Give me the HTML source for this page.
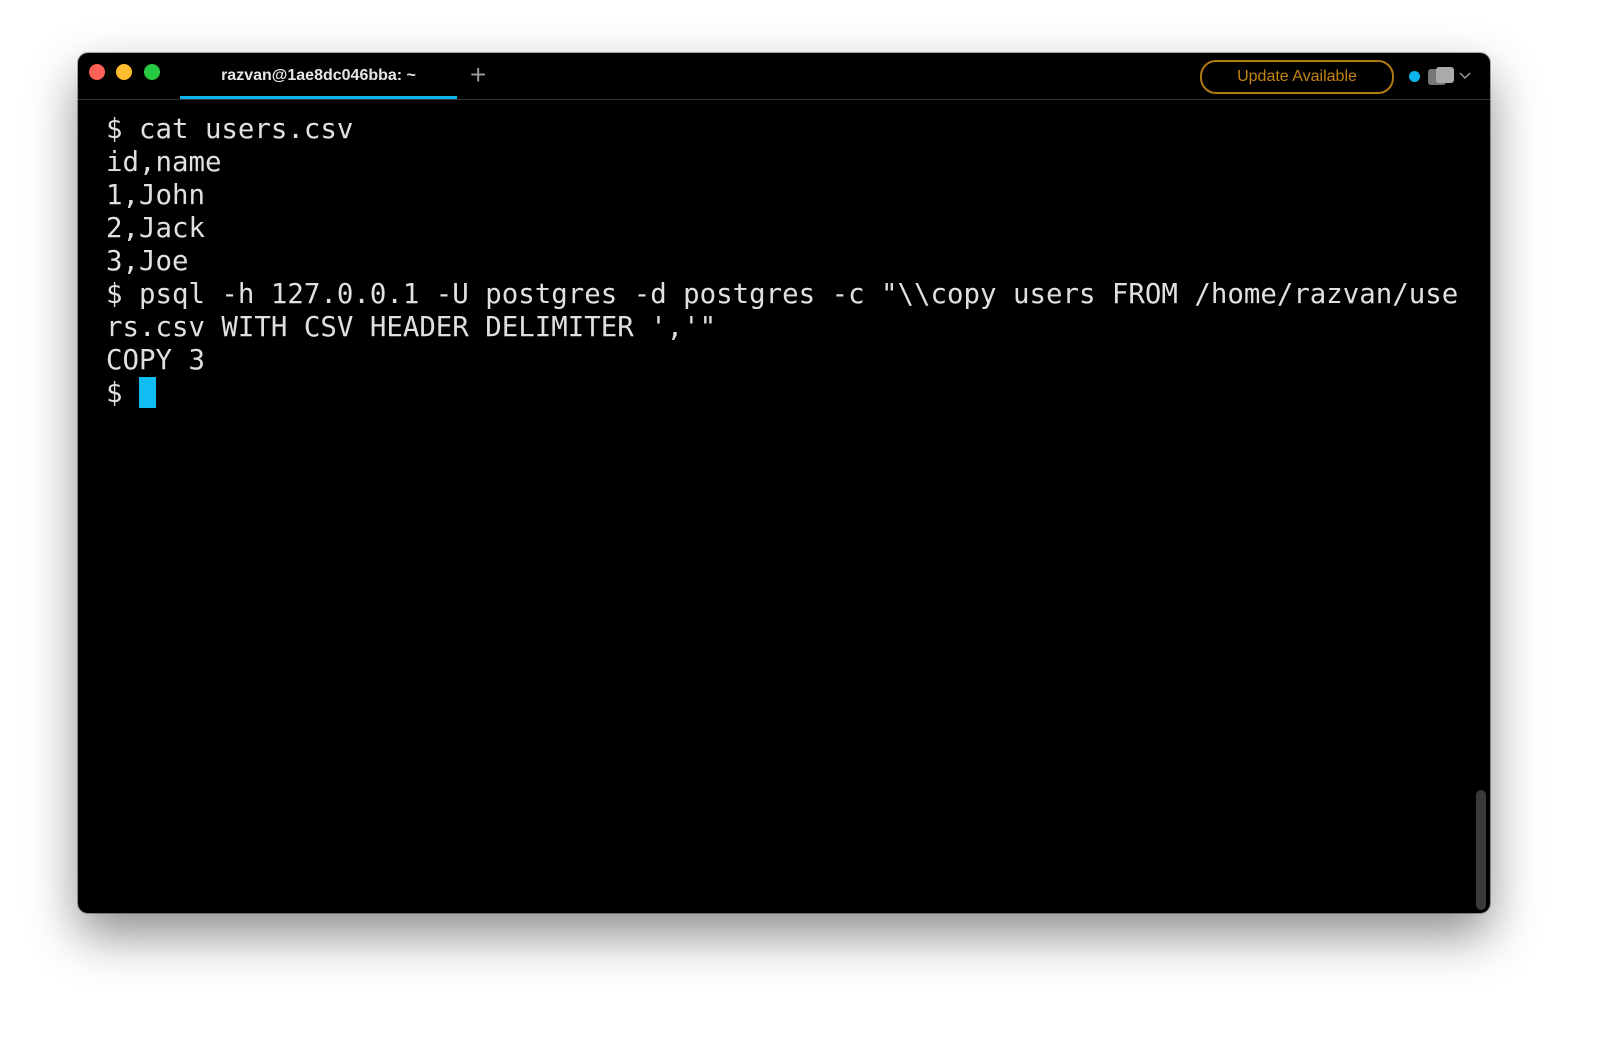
<!DOCTYPE html>
<html><head><style>
body{margin:0;width:1600px;height:1037px;background:#fff;position:relative;overflow:hidden}
.win{position:absolute;left:78px;top:53px;width:1412px;height:860px;background:#000;border-radius:10px;box-shadow:0 22px 50px rgba(0,0,0,.45),0 0 0 1px rgba(0,0,0,.3);overflow:hidden}
.dot{position:absolute;top:11px;width:16px;height:16px;border-radius:50%}
.bar{position:absolute;left:0;right:0;top:46px;height:1px;background:#333}
.tab{position:absolute;left:102px;top:0;width:277px;height:47px;color:#e6e6e6;font:600 16px "Liberation Sans",sans-serif;text-align:center;line-height:46px}
.tab:after{content:"";position:absolute;left:0;right:0;bottom:0;height:4px;background:#0bb4ea}
.plus{position:absolute;left:392px;top:6px;color:#999;font:300 28px "Liberation Sans",sans-serif}
.upd{position:absolute;left:1122px;top:7px;width:190px;height:30px;border:2px solid #b07a10;border-radius:16px;color:#c3850f;font:16px "Liberation Sans",sans-serif;text-align:center;line-height:30px}
pre{position:absolute;left:28px;top:60px;margin:0;color:#e0e0e0;font:27.4px/33px "DejaVu Sans Mono",monospace}
.cur{display:inline-block;width:17px;height:31px;background:#10bdf2;vertical-align:-6px}
.sb{position:absolute;left:1398px;top:737px;width:10px;height:120px;border-radius:5px;background:#3a3a3a}
</style></head><body>
<div class="win">
<div class="dot" style="left:11px;background:#fe5f57"></div>
<div class="dot" style="left:38px;background:#febc2e"></div>
<div class="dot" style="left:66px;background:#28c840"></div>
<div class="tab">razvan@1ae8dc046bba: ~</div>
<div class="plus">+</div>
<div class="bar"></div>
<div class="upd">Update Available</div>
<div style="position:absolute;left:1331px;top:18px;width:11px;height:11px;border-radius:50%;background:#0bb4ea"></div>
<div style="position:absolute;left:1350px;top:16px;width:18px;height:16px;border-radius:3px;background:#777"></div>
<div style="position:absolute;left:1358px;top:14px;width:18px;height:16px;border-radius:3px;background:#aaa"></div>
<svg style="position:absolute;left:1381px;top:18px" width="12" height="10"><path d="M1 2l5 5 5-5" stroke="#999" stroke-width="1.5" fill="none"/></svg>
<pre>$ cat users.csv
id,name
1,John
2,Jack
3,Joe
$ psql -h 127.0.0.1 -U postgres -d postgres -c "\\copy users FROM /home/razvan/use
rs.csv WITH CSV HEADER DELIMITER ','"
COPY 3
$ <span class="cur"></span></pre>
<div class="sb"></div>
</div>
</body></html>
